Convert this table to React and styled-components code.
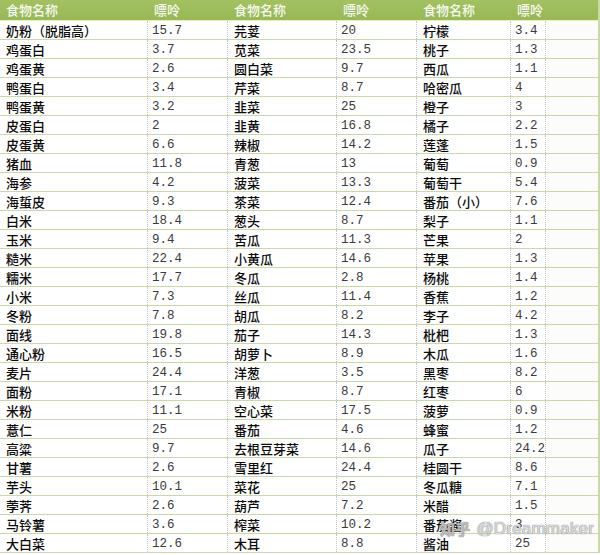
import React from "react";
import styled, { createGlobalStyle } from "styled-components";

const GlobalStyle = createGlobalStyle`
  html, body { margin: 0; padding: 0; background: #ffffff; }
  body { font-family: "Noto Sans CJK SC", "Noto Sans", sans-serif; }
`;

const COLS = "148px 80px 109px 80px 94px 35px 52px";

const Sheet = styled.div`
  position: relative;
  width: 600px;
  height: 555px;
  overflow: hidden;
  background: #ffffff;
`;

const Table = styled.div`
  width: 598px;
  border-right: 2px solid #c9dba4;
  box-sizing: content-box;
`;

const HeaderRow = styled.div`
  display: grid;
  grid-template-columns: ${COLS};
  height: 20px;
  background: linear-gradient(#a3c162, #97b855);
  border-bottom: 1px solid #e4edd2;
`;

const HeaderCell = styled.div`
  padding-left: 6px;
  font-size: 13px;
  line-height: 20px;
  color: #f6f9ef;
  font-weight: 500;
  white-space: nowrap;
`;

const Row = styled.div`
  display: grid;
  grid-template-columns: ${COLS};
  height: 19px;
  box-sizing: border-box;
  border-bottom: 1px solid #c8d9a6;
`;

const Cell = styled.div`
  box-sizing: border-box;
  padding-left: ${(p) => (p.$num ? "4px" : "6px")};
  border-right: 1px dotted #c4c4c4;
  white-space: nowrap;
  overflow: visible;
  height: 18px;
  line-height: 20px;
  color: ${(p) => (p.$num ? "#3a3a3a" : "#0c0c0c")};
  font-family: ${(p) =>
    p.$num
      ? '"Liberation Mono", "DejaVu Sans Mono", monospace'
      : '"Noto Sans CJK SC", "Noto Sans", sans-serif'};
  font-size: ${(p) => (p.$num ? "12.5px" : "13px")};
  font-weight: ${(p) => (p.$num ? 400 : 500)};
`;

const EmptyCell = styled.div`
  background: #fcfcfa;
`;

const Watermark = styled.div`
  position: absolute;
  left: 440px;
  top: 518px;
  display: flex;
  align-items: center;
  gap: 6px;
  font-family: "Liberation Sans", "Noto Sans CJK SC", sans-serif;
  font-size: 17px;
  color: rgba(238, 238, 238, 0.85);
  text-shadow: 0 0 1px #7a7a7a, 0 0 1px #8a8a8a;
  letter-spacing: 0.2px;
  pointer-events: none;
`;

const WatermarkLogo = styled.span`
  font-family: "Noto Sans CJK SC", sans-serif;
  font-size: 15px;
  font-weight: 700;
  color: rgba(230, 230, 230, 0.6);
`;

const data = [
  ["奶粉（脱脂高）", "15.7", "芫荽", "20", "柠檬", "3.4"],
  ["鸡蛋白", "3.7", "苋菜", "23.5", "桃子", "1.3"],
  ["鸡蛋黄", "2.6", "圆白菜", "9.7", "西瓜", "1.1"],
  ["鸭蛋白", "3.4", "芹菜", "8.7", "哈密瓜", "4"],
  ["鸭蛋黄", "3.2", "韭菜", "25", "橙子", "3"],
  ["皮蛋白", "2", "韭黄", "16.8", "橘子", "2.2"],
  ["皮蛋黄", "6.6", "辣椒", "14.2", "莲蓬", "1.5"],
  ["猪血", "11.8", "青葱", "13", "葡萄", "0.9"],
  ["海参", "4.2", "菠菜", "13.3", "葡萄干", "5.4"],
  ["海蜇皮", "9.3", "茶菜", "12.4", "番茄（小）", "7.6"],
  ["白米", "18.4", "葱头", "8.7", "梨子", "1.1"],
  ["玉米", "9.4", "苦瓜", "11.3", "芒果", "2"],
  ["糙米", "22.4", "小黄瓜", "14.6", "苹果", "1.3"],
  ["糯米", "17.7", "冬瓜", "2.8", "杨桃", "1.4"],
  ["小米", "7.3", "丝瓜", "11.4", "香蕉", "1.2"],
  ["冬粉", "7.8", "胡瓜", "8.2", "李子", "4.2"],
  ["面线", "19.8", "茄子", "14.3", "枇杷", "1.3"],
  ["通心粉", "16.5", "胡萝卜", "8.9", "木瓜", "1.6"],
  ["麦片", "24.4", "洋葱", "3.5", "黑枣", "8.2"],
  ["面粉", "17.1", "青椒", "8.7", "红枣", "6"],
  ["米粉", "11.1", "空心菜", "17.5", "菠萝", "0.9"],
  ["薏仁", "25", "番茄", "4.6", "蜂蜜", "1.2"],
  ["高粱", "9.7", "去根豆芽菜", "14.6", "瓜子", "24.2"],
  ["甘薯", "2.6", "雪里红", "24.4", "桂圆干", "8.6"],
  ["芋头", "10.1", "菜花", "25", "冬瓜糖", "7.1"],
  ["荸荠", "2.6", "葫芦", "7.2", "米醋", "1.5"],
  ["马铃薯", "3.6", "榨菜", "10.2", "番茄酱", "3"],
  ["大白菜", "12.6", "木耳", "8.8", "酱油", "25"],
];

const headers = ["食物名称", "嘌呤", "食物名称", "嘌呤", "食物名称", "嘌呤", ""];

export default function App() {
  return (
    <>
      <GlobalStyle />
      <Sheet>
        <Table>
          <HeaderRow>
            {headers.map((h, i) => (
              <HeaderCell key={i}>{h}</HeaderCell>
            ))}
          </HeaderRow>
          {data.map((r, i) => (
            <Row key={i}>
              {r.map((v, j) => (
                <Cell key={j} $num={j % 2 === 1}>
                  {v}
                </Cell>
              ))}
              <EmptyCell />
            </Row>
          ))}
        </Table>
        <Watermark>
          <WatermarkLogo>知乎</WatermarkLogo>
          <span>@Dreammaker</span>
        </Watermark>
      </Sheet>
    </>
  );
}
